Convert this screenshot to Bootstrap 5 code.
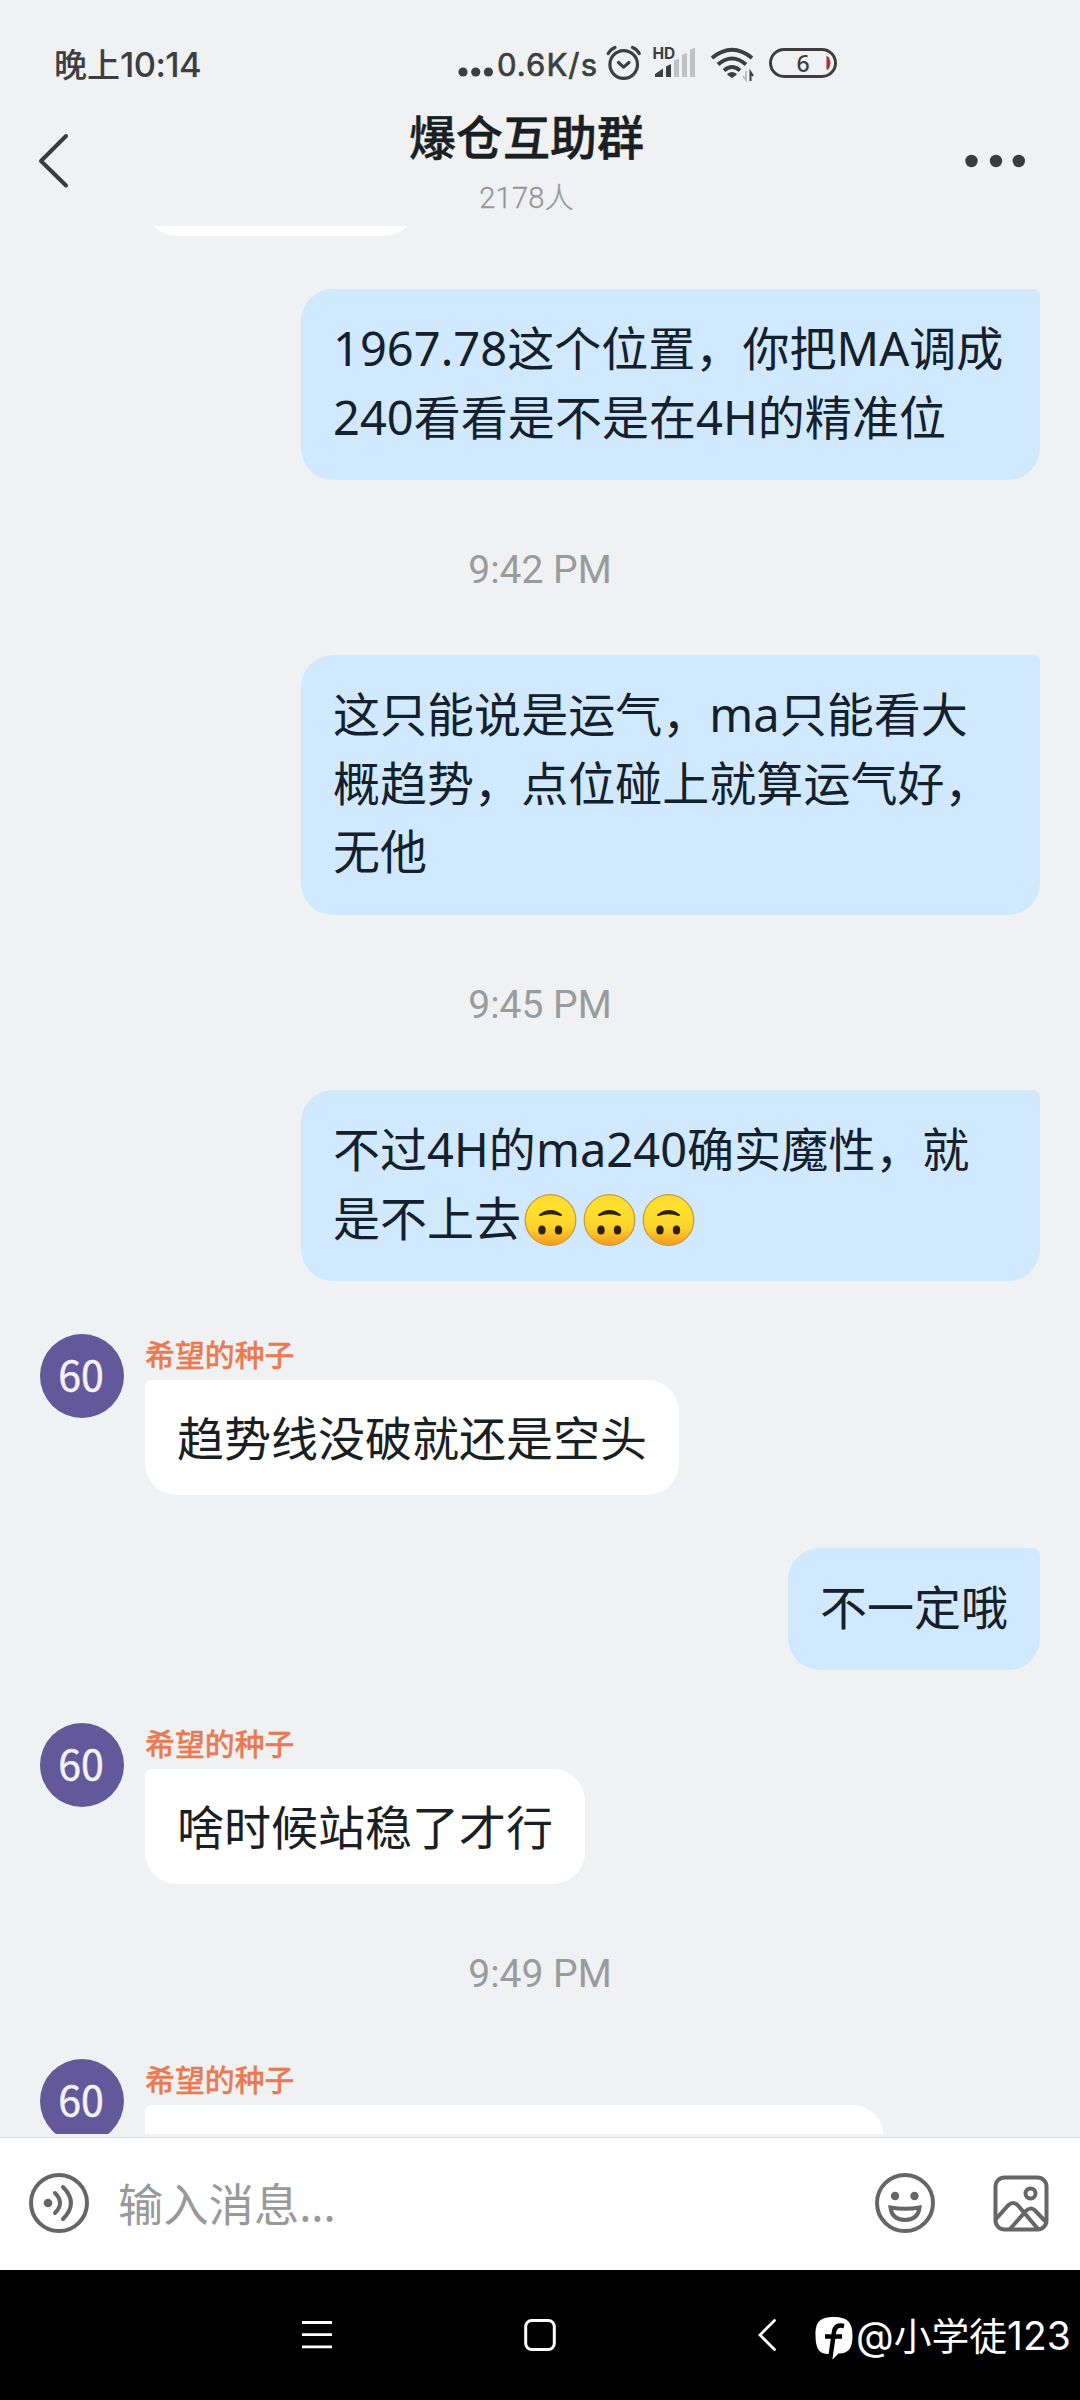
<!DOCTYPE html>
<html lang="zh-CN">
<head>
<meta charset="utf-8">
<meta name="viewport" content="width=device-width, initial-scale=1">
<title>爆仓互助群</title>
<link href="https://cdn.jsdelivr.net/npm/bootstrap@5.3.0/dist/css/bootstrap.min.css" rel="stylesheet">
<style>
  body { background: #eff1f3; font-family: "Noto Sans", "Noto Sans CJK SC", sans-serif; color: #1a1f24; }
  svg { display: block; flex: none; }
  .phone { width: 1080px; height: 2400px; overflow: hidden; }
  .status { height: 84px; padding: 44px 0 0 54px; color: #3c3e40; font-family: Inter, "Noto Sans CJK SC", sans-serif; font-weight: 500; line-height: 42px; }
  .clock { width: 403px; font-size: 33px; white-space: nowrap; padding-top: 2px; }
  .clock span { letter-spacing: -.6px; font-size: 34.5px; }
  .speed { width: 106px; padding: 1px 0 0 4px; font-size: 31px; letter-spacing: 1.1px; font-weight: 400; -webkit-text-stroke: .7px #3c3e40; }
  .topbar { height: 142px; padding: 0 52px 0 36px; }
  .group-title { font: 500 47px/60px "Noto Sans CJK SC", sans-serif; padding-top: 21px; -webkit-text-stroke: .5px #1a1f24; }
  .group-count { font: 300 29px/36px Roboto, "Noto Sans CJK SC", sans-serif; letter-spacing: .2px; color: #949698; padding-top: 15px; -webkit-text-stroke: .3px #949698; }
  .heading { margin-left: 19px; }
  .messages { height: 1908px; overflow: hidden; padding: 0 40px; }
  .bubble { font-size: 47px; line-height: 68.6px; padding: 25px 32px 0; white-space: nowrap; width: max-content; border-radius: 32px; }
  .mine { background: #d1e9ff; border-top-right-radius: 7px; margin-left: auto; color: #14202b; }
  .theirs { background: #fff; border-top-left-radius: 7px; height: 115px; padding-top: 24px; }
  .wide { width: 739px; }
  .two, .three { letter-spacing: .04px; }
  .two { height: 191px; } .three { height: 260px; } .one { height: 122px; }
  .stamp { font: 400 39px/46px Roboto, sans-serif; color: #999b9d; text-align: center; margin: 67px 0 62px; }
  .avatar { width: 84px; height: 84px; background: #63599a; color: #f3f2fb; font: 400 41px/78px "Noto Sans CJK SC", sans-serif; flex: none; text-align: center; margin-right: 21px; padding-right: 2px; -webkit-text-stroke: .5px #f3f2fb; }
  .sender { font: 500 29.9px/38px "Noto Sans CJK SC", sans-serif; color: #e97b52; height: 46px; -webkit-text-stroke: .3px #e97b52; }
  .previous { width: 271px; margin: -105px 0 53px 105px; }
  .emoji { display: inline-block; vertical-align: -11px; }
  .composer { height: 133px; background: #fff; border-top: 1px solid #d9dbdd; padding: 0 29px 2px 28px; }
  .edge { height: 3px; }
  .placeholder-text { font: 400 45.3px/60px "Noto Sans", "Noto Sans CJK SC", sans-serif; color: #999; margin: 4px 0 0 28px; }
  .softkeys { height: 130px; background: #000; padding: 0 9px 0 302px; }
  .watermark { color: #fff; font: 400 37.800px/50px "Noto Sans CJK SC", sans-serif; white-space: nowrap; margin-left: 3px; }
  .watermark .latin { font-family: Inter, sans-serif; font-weight: 400; font-size: 39px; }
</style>
</head>
<body>
<div class="phone d-flex flex-column">
  <div class="status d-flex align-items-center">
    <div class="clock">晚上<span>10:14</span></div>
    <svg width="36" height="40"><g fill="#3c3e40"><circle cx="6" cy="28" r="4.6"/><circle cx="18.7" cy="28" r="4.6"/><circle cx="31.4" cy="28" r="4.6"/></g></svg>
    <div class="speed">0.6K/s</div>
    <svg class="ms-1" width="44" height="40" viewBox="603 45 44 40" fill="none" stroke="#3c3e40" stroke-width="3.2" stroke-linecap="round" stroke-linejoin="round"><circle cx="623.7" cy="65.5" r="13.8"/><path d="M618.5 63.5l5.2 4.6 5.2-4.6"/><path d="M608.2 54.5q2.5-4.5 6.8-6M639.3 54.5q-2.500-4.500-6.800-6"/></svg>
    <svg width="60" height="40" viewBox="647 45 60 40"><text x="652.500" y="59.500" font-family="Inter" font-size="15.500" font-weight="700" fill="#3c3e40">HD</text><g fill="#3c3e40"><path d="M655 78v-3l8-5.500v8.500zM666 78v-10.500l5-2.500v13z"/></g><g fill="#bfc1c3"><path d="M674 78V61.500l5-2v18.500zM682 78V56l5-2v24zM690 78V51l5-2.500V78z"/></g></svg>
    <svg width="56" height="40" viewBox="707 45 56 40"><g fill="none" stroke="#3c3e40" stroke-width="4"><path d="M712 59q20-16.500 40 0M718 65.500q14-12 28 0M724 71.500q8-7 16 0"/></g><path d="M727.500 74.500q4.500-3 9 0v1.500l-4.500 3-4.500-3z" fill="#3c3e40"/><path d="M746 72v9l-3-4" fill="none" stroke="#bfc1c3" stroke-width="2"/><path d="M750.500 82v-9l2.500 4" fill="none" stroke="#3c3e40" stroke-width="2"/></svg>
    <svg width="80" height="40" viewBox="763 45 80 40"><rect x="770.500" y="50.500" width="65" height="27" rx="13.500" fill="none" stroke="#3c3e40" stroke-width="3"/><path d="M826.500 57q3 0 4 7-1 7-4 7z" fill="#b52a35"/><text x="803" y="72.500" text-anchor="middle" font-family="Noto Sans" font-weight="500" font-size="23" fill="#3c3e40">6</text></svg>
  </div>
  <header class="topbar d-flex align-items-start justify-content-between">
    <svg width="36" height="142" fill="none" stroke="#3b3c3e" stroke-width="4" stroke-linecap="round" stroke-linejoin="round"><path d="M30 52L5 77l25 24.500"/></svg>
    <div class="heading text-center"><div class="group-title">爆仓互助群</div><div class="group-count">2178人</div></div>
    <svg width="66" height="142" fill="#3b3c3e"><circle cx="9.500" cy="77" r="6.200"/><circle cx="34" cy="77" r="6.200"/><circle cx="56.800" cy="77" r="6.200"/></svg>
  </header>
  <main class="messages">
    <div class="bubble theirs previous"></div>
    <div class="bubble mine wide two">1967.78这个位置，你把MA调成<br>240看看是不是在4H的精准位</div>
    <div class="stamp">9:42 PM</div>
    <div class="bubble mine wide three">这只能说是运气，ma只能看大<br>概趋势，点位碰上就算运气好，<br>无他</div>
    <div class="stamp">9:45 PM</div>
    <div class="bubble mine wide two">不过4H的ma240确实魔性，就<br>是不上去<svg class="emoji" width="59" height="54" viewBox="0 0 59 54"><defs><linearGradient id="face" x1="0" y1="0" x2="0" y2="1"><stop offset="0" stop-color="#fdd835"/><stop offset=".25" stop-color="#ffe12b"/><stop offset=".65" stop-color="#fdd32b"/><stop offset="1" stop-color="#f59a20"/></linearGradient><g id="flip"><circle cx="29.500" cy="27" r="25.300" fill="url(#face)" stroke="#cf9a3a" stroke-width="1.300"/><path d="M19 22Q29.500 14 40 22Q29.500 18.500 19 22z" fill="#2e2205" stroke="#2e2205" stroke-width="2" stroke-linejoin="round"/><ellipse cx="21" cy="37" rx="3.700" ry="4.500" fill="#2e2205"/><ellipse cx="37.500" cy="37" rx="3.700" ry="4.500" fill="#2e2205"/></g></defs><use href="#flip"/></svg><svg class="emoji" width="59" height="54"><use href="#flip"/></svg><svg class="emoji" width="59" height="54"><use href="#flip"/></svg></div>
    <div class="d-flex align-items-start" style="margin-top:53px"><div class="avatar rounded-circle">60</div><div><div class="sender">希望的种子</div><div class="bubble theirs">趋势线没破就还是空头</div></div></div>
    <div class="bubble mine one" style="margin-top:53px">不一定哦</div>
    <div class="d-flex align-items-start" style="margin-top:53px"><div class="avatar rounded-circle">60</div><div><div class="sender">希望的种子</div><div class="bubble theirs">啥时候站稳了才行</div></div></div>
    <div class="stamp">9:49 PM</div>
    <div class="d-flex align-items-start"><div class="avatar rounded-circle">60</div><div><div class="sender">希望的种子</div><div class="bubble theirs wide"></div></div></div>
  </main>
  <div class="edge"></div>
  <div class="composer d-flex align-items-center">
    <svg width="62" height="62" viewBox="0 0 62 62" fill="none" stroke="#666" stroke-width="4" stroke-linecap="round"><circle cx="31" cy="31" r="28"/><circle cx="20" cy="31" r="4.300" fill="#666" stroke="none"/><path d="M27 21q10 10 0 20M35 15q16 16 0 32"/></svg>
    <div class="placeholder-text">输入消息...</div>
    <svg class="ms-auto" width="62" height="62" viewBox="0 0 62 62" fill="none" stroke="#666" stroke-width="4"><circle cx="31" cy="31" r="28"/><g fill="#666" stroke="none"><circle cx="21" cy="24" r="4.200"/><circle cx="40.500" cy="24" r="4.200"/></g><path d="M16.500 35.500q14.500 2.500 29 0q-1.500 12.500-14.500 12.500T16.500 35.500z"/></svg>
    <svg style="margin-left:56px" width="59" height="62" viewBox="0 0 59 62" fill="none" stroke="#666" stroke-width="4"><rect x="3.500" y="5.500" width="51" height="52" rx="9"/><circle cx="38.500" cy="21.500" r="5"/><path d="M3.500 47.500l13-14.500q4.500-4 9 0L46 57M18 57l16.500-18.500q4.500-4 8.500 0L54.500 50.500"/></svg>
  </div>
  <nav class="softkeys d-flex align-items-center">
    <svg width="30" height="34" stroke="#fff" stroke-width="2.800"><path d="M0 4.500h30M0 16.700h30M0 28.800h30"/></svg>
    <svg style="margin-left:192px" width="32" height="34" fill="none" stroke="#fff" stroke-width="3"><rect x="1.700" y="2.500" width="28.600" height="29" rx="6"/></svg>
    <svg style="margin-left:201px" width="22" height="34" fill="none" stroke="#fff" stroke-width="2.800" stroke-linecap="round"><path d="M17.500 2.500L3 17l14.500 14.500"/></svg>
    <svg class="mt-2" style="margin-left:36px" width="38" height="46" viewBox="0 0 38 46"><path d="M19 1C5 1 .5 5.500 .5 19S4 37.500 12 38l5.500 0v5.500l6-6C34 37.500 37.500 32 37.500 19.500S33 1 19 1z" fill="#fff"/><path d="M29 10q-9-2-10 6l-3.500 25M10 20.500h17" fill="none" stroke="#000" stroke-width="4.500"/></svg>
    <div class="watermark"><span class="latin">@</span>小学徒<span class="latin">123</span></div>
  </nav>
</div>
<script src="https://cdn.jsdelivr.net/npm/bootstrap@5.3.0/dist/js/bootstrap.bundle.min.js"></script>
</body>
</html>
